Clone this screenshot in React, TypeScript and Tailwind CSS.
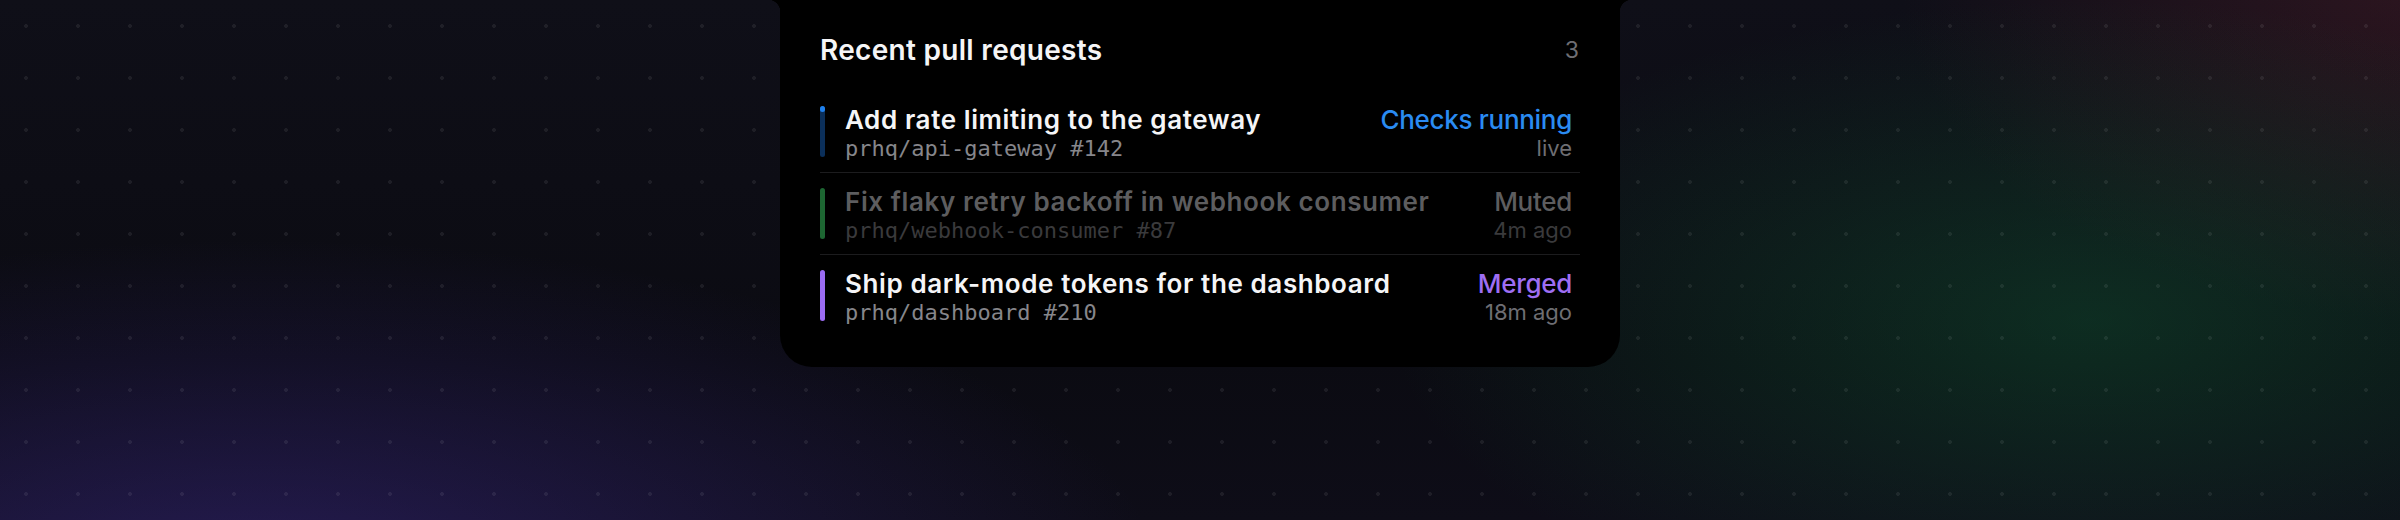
import React from "react";

type Row = {
  title: string;
  repo: string;
  status: string;
  time: string;
  kind: "running" | "muted" | "merged";
};

const rows: Row[] = [
  { title: "Add rate limiting to the gateway", repo: "prhq/api-gateway #142", status: "Checks running", time: "live", kind: "running" },
  { title: "Fix flaky retry backoff in webhook consumer", repo: "prhq/webhook-consumer #87", status: "Muted", time: "4m ago", kind: "muted" },
  { title: "Ship dark-mode tokens for the dashboard", repo: "prhq/dashboard #210", status: "Merged", time: "18m ago", kind: "merged" },
];

function Bar({ kind }: { kind: Row["kind"] }) {
  if (kind === "running") {
    return (
      <div className="w-[5px] h-[51px] shrink-0 rounded-full bg-[#0b2f5a] flex flex-col">
        <div className="w-[5px] h-[6px] rounded-full bg-[#1f80ec]" />
      </div>
    );
  }
  if (kind === "muted") {
    return <div className="w-[5px] h-[51px] shrink-0 rounded-full bg-[#1d6632]" />;
  }
  return <div className="w-[5px] h-[51px] shrink-0 rounded-full bg-[#9b6cf2]" />;
}

function PRRow({ row, first }: { row: Row; first: boolean }) {
  const muted = row.kind === "muted";
  const titleColor = muted ? "text-[#5d5d5f]" : "text-[#f5f5f7]";
  const repoColor = muted ? "text-[#3a3a3c]" : "text-[#86868b]";
  const statusColor =
    row.kind === "running" ? "text-[#2a8bf2]" : row.kind === "muted" ? "text-[#5d5d5f]" : "text-[#9e6ef3]";
  const timeColor = muted ? "text-[#3a3a3c]" : "text-[#6e6e73]";
  return (
    <div className={`flex items-start gap-[20px] py-[15px] pr-[8px] ${first ? "" : "border-t border-[#1c1c1e]"}`}>
      <Bar kind={row.kind} />
      <div className="flex flex-col min-w-0 flex-1 h-[51px]">
        <div className={`text-[26px] leading-[28px] font-semibold tracking-[0.6px] whitespace-nowrap ${titleColor}`}>
          {row.title}
        </div>
        <div className={`text-[22px] leading-[29px] whitespace-nowrap font-['DejaVu_Sans_Mono',monospace] ${repoColor}`}>
          {row.repo}
        </div>
      </div>
      <div className="flex flex-col items-end shrink-0 h-[51px]">
        <div className={`text-[26px] leading-[28px] font-medium tracking-[-0.3px] whitespace-nowrap ${statusColor}`}>{row.status}</div>
        <div className={`text-[22px] leading-[29px] whitespace-nowrap ${timeColor}`}>{row.time}</div>
      </div>
    </div>
  );
}

export default function App() {
  return (
    <div className="w-full h-[520px] overflow-hidden bg-[#0c0c14] bg-[image:radial-gradient(ellipse_900px_340px_at_260px_580px,rgba(64,44,150,0.45),transparent),radial-gradient(ellipse_700px_320px_at_2090px_320px,rgba(18,110,62,0.34),transparent),radial-gradient(ellipse_520px_340px_at_2420px_-20px,rgba(120,36,50,0.28),transparent),linear-gradient(180deg,#0f0f18,#0b0b12_70%,#0e0d18)] font-['Inter','Noto_Sans',sans-serif]">
      <div className="w-full h-full flex justify-center bg-[image:radial-gradient(circle,rgba(255,255,255,0.07)_1.6px,transparent_2.2px)] bg-[size:52px_52px]">
        <div className="relative w-[840px] self-start bg-black rounded-b-[32px] pt-[32px] px-[40px] pb-[31px]">
          <div className="absolute top-0 -left-[12px] w-[12px] h-[12px] bg-[image:radial-gradient(circle_at_0_100%,transparent_12px,#000_12.5px)]" />
          <div className="absolute top-0 -right-[12px] w-[12px] h-[12px] bg-[image:radial-gradient(circle_at_100%_100%,transparent_12px,#000_12.5px)]" />
          <div className="flex items-center justify-between h-[36px] mb-[23px]">
            <div className="text-[28px] leading-[36px] font-semibold text-[#f5f5f7] tracking-[0.3px]">Recent pull requests</div>
            <div className="text-[23px] leading-[36px] text-[#6e6e73] pr-[1px]">3</div>
          </div>
          <div className="flex flex-col">
            {rows.map((r, i) => (
              <PRRow key={r.repo} row={r} first={i === 0} />
            ))}
          </div>
        </div>
      </div>
    </div>
  );
}
